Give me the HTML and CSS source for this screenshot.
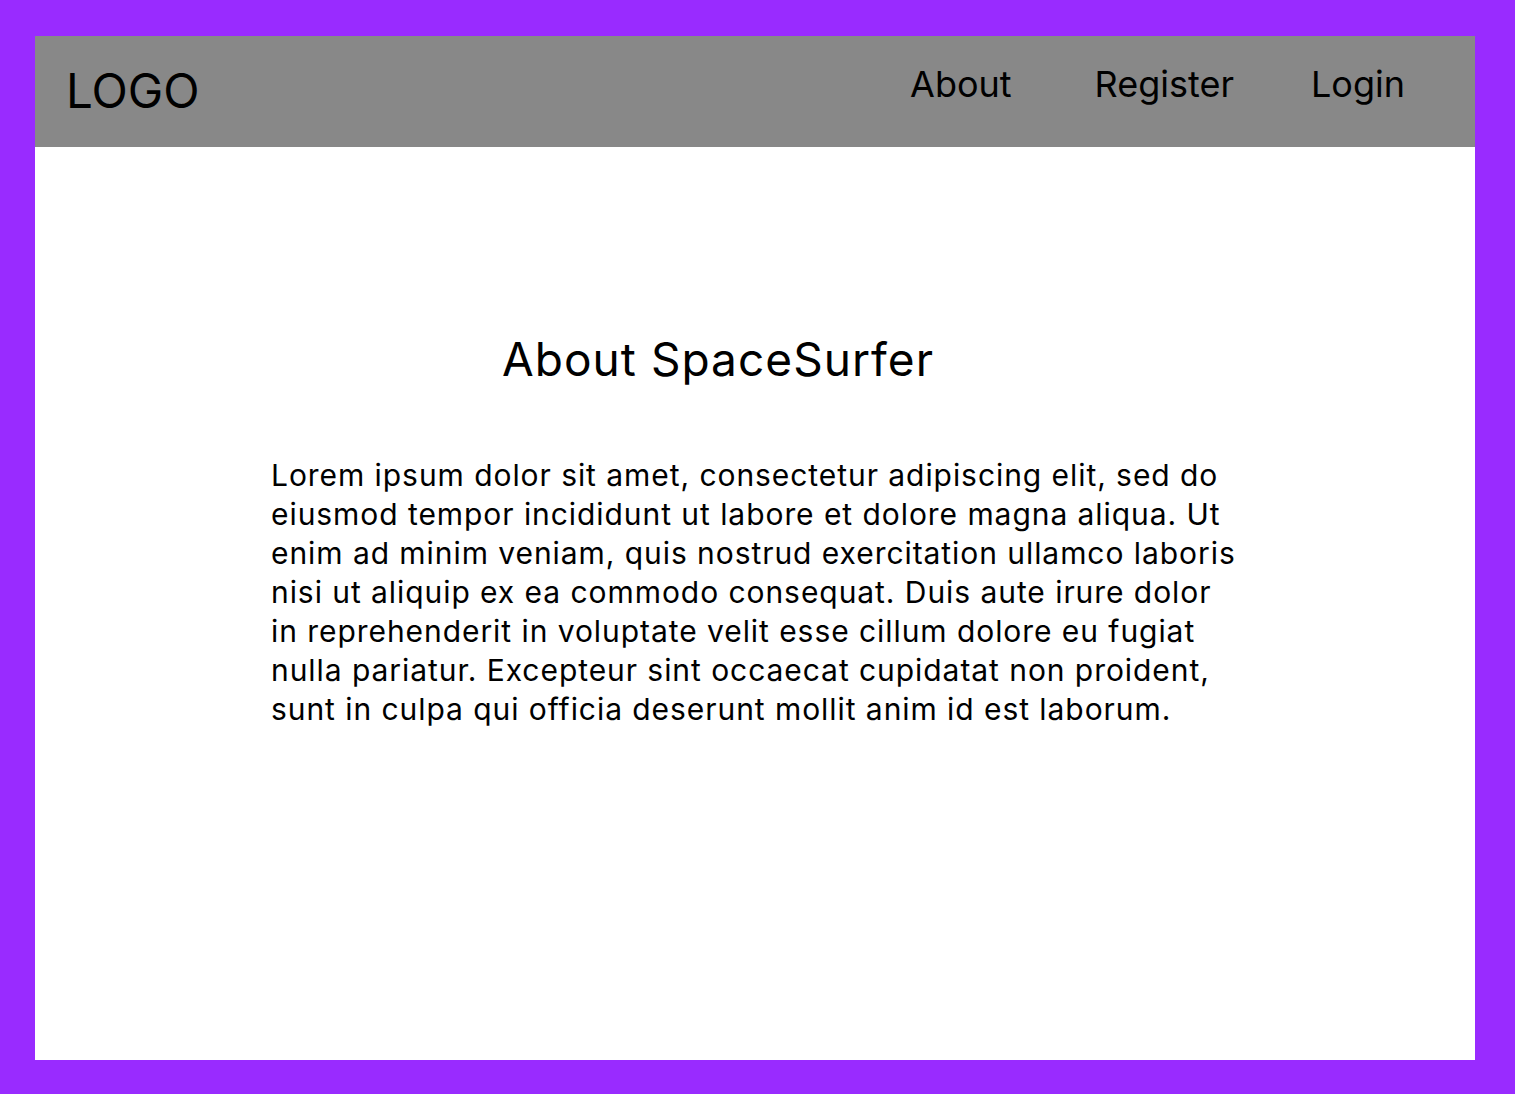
FILE: index.html
```html
<!DOCTYPE html>
<html lang="en">
<head>
<meta charset="utf-8">
<title>About SpaceSurfer</title>
<link rel="stylesheet" href="styles.css">
</head>
<body>
<div class="frame">
  <header class="header">
    <div class="logo">LOGO</div>
    <nav class="nav">
      <a class="nav-link" href="#">About</a>
      <a class="nav-link nav-register" href="#">Register</a>
      <a class="nav-link nav-login" href="#">Login</a>
    </nav>
  </header>
  <main class="content">
    <h1 class="title">About SpaceSurfer</h1>
    <p class="text">Lorem ipsum dolor sit amet, consectetur adipiscing elit, sed do eiusmod tempor incididunt ut labore et dolore magna aliqua. Ut enim ad minim veniam, quis nostrud exercitation ullamco laboris nisi ut aliquip ex ea commodo consequat. Duis aute irure dolor in reprehenderit in voluptate velit esse cillum dolore eu fugiat nulla pariatur. Excepteur sint occaecat cupidatat non proident, sunt in culpa qui officia deserunt mollit anim id est laborum.</p>
  </main>
</div>
</body>
</html>
```

FILE: styles.css
```css
html, body {
  margin: 0;
  padding: 0;
}
body {
  background: #992bff;
  font-family: Inter, "Noto Sans", sans-serif;
  color: #000;
  width: 1515px;
  height: 1094px;
  overflow: hidden;
}
.frame {
  margin: 36px 0 0 35px;
  width: 1440px;
  height: 1024px;
  background: #fff;
  display: flex;
  flex-direction: column;
}
.header {
  height: 111px;
  background: #888888;
  display: flex;
  align-items: flex-start;
  justify-content: space-between;
  padding: 0 70px 0 31px;
}
.logo {
  font-size: 47.5px;
  line-height: 58px;
  margin-top: 26px;
}
.nav {
  display: flex;
  margin-top: 26px;
}
.nav-link {
  color: #000;
  text-decoration: none;
  font-size: 36px;
  line-height: 44px;
}
.nav-register {
  margin-left: 83px;
}
.nav-login {
  margin-left: 77px;
}
.content {
  display: flex;
  flex-direction: column;
  align-items: center;
}
.title {
  font-weight: 400;
  font-size: 46px;
  line-height: 56px;
  letter-spacing: 1.05px;
  margin: 184px 0 0 -74px;
}
.text {
  width: 974px;
  font-size: 30px;
  line-height: 39px;
  letter-spacing: 0.94px;
  margin: 69px 0 0 6px;
}
```
